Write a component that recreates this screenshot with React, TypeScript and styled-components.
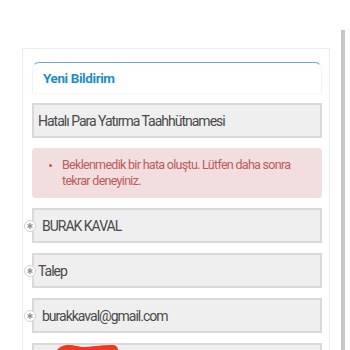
import styled, { createGlobalStyle } from 'styled-components';

const GlobalStyle = createGlobalStyle`
  html, body {
    margin: 0;
    padding: 0;
    background: #fff;
  }
  body {
    font-family: Roboto, "Noto Sans", sans-serif;
    overflow: hidden;
  }
`;

const Page = styled.div`
  display: flex;
  align-items: flex-start;
  height: 350px;
  overflow: hidden;
`;

const Card = styled.section`
  margin: 48px 0 0 22px;
  width: 308px;
  box-sizing: border-box;
  border: 1px solid #ececec;
  border-bottom: none;
  padding: 13px 7px 20px 9px;
  display: flex;
  flex-direction: column;
  gap: 10px;
  background: #fff;
`;

const ScrollBar = styled.div`
  margin: 30px 0 0 11px;
  width: 4px;
  height: 330px;
  background: #c6c6c6;
`;

const Header = styled.header`
  height: 31px;
  box-sizing: border-box;
  border-top: 1px solid #69adc6;
  border-left: 1px solid #eef4f6;
  border-right: 1px solid #eef4f6;
  border-radius: 7px 7px 0 0;
  box-shadow: 0 1px 2px rgba(0, 0, 0, 0.04);
  display: flex;
  align-items: center;
  padding-left: 10px;

  h2 {
    margin: 0;
    font-size: 13.5px;
    letter-spacing: -0.4px;
    font-weight: 700;
    color: #1f8ec4;
  }
`;

const Field = styled.div`
  position: relative;
`;

const Input = styled.div<{ $indent: number }>`
  height: 35px;
  box-sizing: border-box;
  border: 2px solid #d9d9d9;
  background: #efefef;
  display: flex;
  align-items: center;
  padding-left: ${(p) => p.$indent}px;
  font-size: 14px;
  letter-spacing: -1px;
  color: #4a4a4a;
`;

const Required = styled.span`
  position: absolute;
  left: -8px;
  top: 50%;
  transform: translateY(-50%);
  width: 12px;
  height: 12px;
  box-sizing: border-box;
  border-radius: 50%;
  border: 1px solid #d2d2d2;
  background: #fff;
  display: grid;
  place-items: center;
`;

const Alert = styled.div`
  background: #f2dede;
  border-radius: 4px;
  padding: 9px 14px 9px 0;
  color: #bd5a5c;
  font-size: 12.5px;
  letter-spacing: -0.7px;
  line-height: 16px;

  ul {
    margin: 0;
    padding-left: 30px;
  }
  li::marker {
    font-size: 10px;
  }
`;

const Scribble = styled.svg`
  align-self: flex-start;
  margin-top: -1px;
`;

const Asterisk = () => (
  <svg width="6" height="6" viewBox="0 0 6 6">
    <g stroke="#8f8f8f" strokeWidth="1.3" strokeLinecap="round">
      <line x1="3" y1="0.6" x2="3" y2="5.4" />
      <line x1="0.9" y1="1.8" x2="5.1" y2="4.2" />
      <line x1="0.9" y1="4.2" x2="5.1" y2="1.8" />
    </g>
  </svg>
);

const fields = [
  { text: 'BURAK KAVAL', indent: 8 },
  { text: 'Talep', indent: 4 },
  { text: 'burakkaval@gmail.com', indent: 8 },
];

const App = () => {
  return (
    <Page>
      <GlobalStyle />
      <Card>
        <Header>
          <h2>Yeni Bildirim</h2>
        </Header>
        <Input $indent={4}>Hatalı Para Yatırma Taahhütnamesi</Input>
        <Alert>
          <ul>
            <li>Beklenmedik bir hata oluştu. Lütfen daha sonra tekrar deneyiniz.</li>
          </ul>
        </Alert>
        {fields.map((f) => (
          <Field key={f.text}>
            <Required>
              <Asterisk />
            </Required>
            <Input $indent={f.indent}>{f.text}</Input>
          </Field>
        ))}
        <Input $indent={21}>
          <Scribble width="64" height="14" viewBox="0 0 64 14">
            <path
              d="M1 9 C2 4 7 1 14 1 C20 1 23 3 30 3 C40 2 50 1 57 1 C61 1 63 3 63 6 L63 14 L0 14 Z"
              fill="#ee3a1f"
            />
          </Scribble>
        </Input>
      </Card>
      <ScrollBar />
    </Page>
  );
};

export default App;
